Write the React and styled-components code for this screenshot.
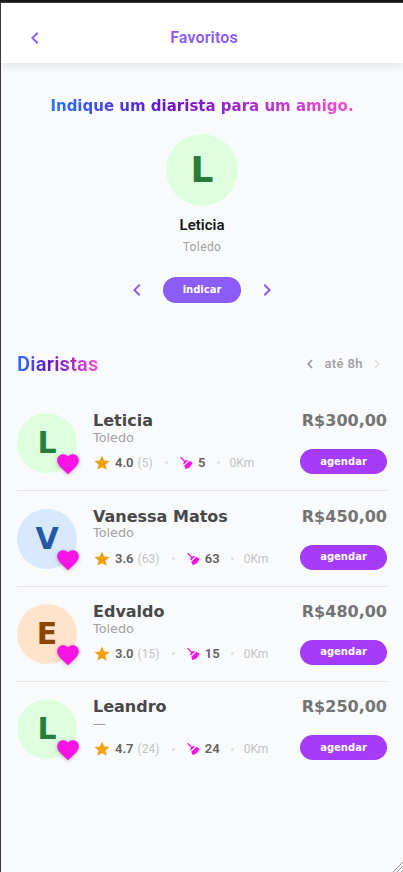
import { useState } from 'react';
import styled, { createGlobalStyle } from 'styled-components';

const GlobalStyle = createGlobalStyle`
  * {
    box-sizing: border-box;
  }

  body {
    margin: 0;
    background: #f9fafc;
    overflow: hidden;
  }

  button {
    padding: 0;
    border: none;
    background: transparent;
    cursor: pointer;
  }
`;

const Frame = styled.div`
  height: 872px;
  width: 403px;
  padding-top: 2px;
  background: #18181a;
`;

const Screen = styled.div`
  display: flex;
  flex-direction: column;
  position: relative;
  height: 870px;
  border-top: 1px solid #38383d;
  border-left: 1px solid #38383d;
  background: #f9fafc;
  overflow: hidden;
`;

const Header = styled.header`
  display: grid;
  grid-template-columns: 68px 1fr 68px;
  align-items: center;
  flex-shrink: 0;
  height: 60px;
  padding-top: 9px;
  background: white;
  box-shadow: 0 2px 10px rgba(0, 0, 0, 0.11);
`;

const HeaderTitle = styled.h1`
  margin: 0;
  padding-left: 4px;
  color: #8b5cf6;
  font: 600 16px/24px Roboto, sans-serif;
  letter-spacing: 0.15px;
  text-align: center;
`;

const IconButton = styled.button`
  display: flex;
  align-items: center;
  justify-content: center;
  width: ${({ $size }) => $size}px;
  height: ${({ $size }) => $size}px;
  margin-left: ${({ $left }) => $left || 0}px;
  color: ${({ $color }) => $color};
`;

const gradient = `
  background: linear-gradient(90deg, #2575fc 0%, #6a11cb 40%, #f94fd0 100%);
  -webkit-background-clip: text;
  background-clip: text;
  color: transparent;
`;

const Recommend = styled.section`
  display: flex;
  flex-direction: column;
  align-items: center;
  padding-top: 33px;
`;

const RecommendTitle = styled.h2`
  margin: 0 0 18px;
  font: bold 15px/20px "DejaVu Sans", sans-serif;
  ${gradient}
`;

const Avatar = styled.div`
  display: flex;
  align-items: center;
  justify-content: center;
  width: ${({ $size }) => $size}px;
  height: ${({ $size }) => $size}px;
  border-radius: 50%;
  background: ${({ $background }) => $background};
  color: ${({ $color }) => $color};
  font: bold ${({ $font }) => $font}px/1 "DejaVu Sans", sans-serif;
`;

const FeaturedName = styled.strong`
  margin-top: 8px;
  color: #18181b;
  font: 600 15px/22px Roboto, sans-serif;
`;

const FeaturedCity = styled.span`
  margin-top: 1px;
  color: #a1a1a1;
  font: 12px/20px Roboto, sans-serif;
  letter-spacing: 0.4px;
`;

const Controls = styled.div`
  display: flex;
  align-items: center;
  gap: 14px;
  height: 26px;
  margin-top: 20px;
`;

const Pill = styled.button`
  && {
    width: ${({ $width }) => $width}px;
    height: ${({ $height }) => $height}px;
    border-radius: 13px;
    background: ${({ $background }) => $background};
    color: white;
    font: bold 10px/14px "DejaVu Sans", sans-serif;
  }
`;

const List = styled.main`
  padding: 47px 16px 0;
`;

const ListHeader = styled.div`
  display: flex;
  align-items: center;
  justify-content: space-between;
  height: 28px;
  margin-bottom: 17px;
`;

const ListTitle = styled.h2`
  margin: 0;
  font: 600 20px/28px Roboto, sans-serif;
  letter-spacing: 0.25px;
  ${gradient}
`;

const Duration = styled.div`
  display: flex;
  align-items: center;
  gap: 5px;
  margin-right: 1px;
  color: #a1a1a1;
  font: 500 13px/18px Roboto, sans-serif;
  letter-spacing: 0.4px;
`;

const Row = styled.article`
  display: grid;
  grid-template-columns: 60px 1fr 87px;
  column-gap: 16px;
  height: 95.33px;
  padding-top: 18px;

  & + & {
    border-top: 1px solid #e4e4e7;
    padding-top: 17.33px;
  }
`;

const AvatarBox = styled.div`
  position: relative;
  height: 60px;
`;

const Heart = styled.svg`
  position: absolute;
  right: -4px;
  bottom: -4px;
  filter: drop-shadow(0 1px 2px rgba(0, 0, 0, 0.25));
`;

const Info = styled.div`
  display: flex;
  flex-direction: column;
  margin-top: -1px;
  white-space: nowrap;
`;

const Name = styled.strong`
  color: #484848;
  font: bold 16px/18px "DejaVu Sans", sans-serif;
`;

const City = styled.span`
  margin-top: -0.4px;
  color: #a1a1a1;
  font: 12.8px/16px "DejaVu Sans", sans-serif;
`;

const Stats = styled.div`
  display: flex;
  align-items: center;
  height: 18px;
  margin-top: 8.3px;
  color: #c4c4c4;
  font: 12px/18px Roboto, sans-serif;
`;

const Value = styled.b`
  margin: 0 4px;
  color: #616161;
  font-size: 13px;
  font-weight: 600;
`;

const Dot = styled.i`
  width: 3px;
  height: 3px;
  margin: 0 10px 0 ${({ $left }) => $left}px;
  border-radius: 50%;
  background: #dedede;
`;

const Side = styled.div`
  display: flex;
  flex-direction: column;
  align-items: flex-end;
  margin-top: -1px;
`;

const Price = styled.strong`
  margin-bottom: 19px;
  color: #747474;
  font: bold 16px/18px "DejaVu Sans", sans-serif;
  white-space: nowrap;
`;

const ResizeGrip = styled.svg`
  position: absolute;
  right: 0;
  bottom: 0;
`;

function Chevron({ size, right }) {
  return (
    <svg width={size} height={size} viewBox="0 0 24 24" fill="currentColor">
      {right ? (
        <path d="M8.59 16.59L13.17 12 8.59 7.41 10 6l6 6-6 6z" />
      ) : (
        <path d="M15.41 16.59L10.83 12l4.58-4.59L14 6l-6 6 6 6z" />
      )}
    </svg>
  );
}

function StarIcon() {
  return (
    <svg width="18" height="18" viewBox="0 0 24 24" fill="#f59e0b">
      <path d="M12 17.27L18.18 21l-1.64-7.03L22 9.24l-7.19-.61L12 2 9.19 8.63 2 9.24l5.46 4.73L5.82 21z" />
    </svg>
  );
}

function BroomIcon() {
  return (
    <svg width="16" height="16" viewBox="0 0 24 24" fill="#f913e4">
      <g transform="translate(24 0) scale(-1 1)">
        <path d="M19.36 2.72l1.42 1.42-5.72 5.71c1.07 1.54 1.22 3.39.32 4.59L9.06 8.12c1.2-.9 3.05-.75 4.59.32l5.71-5.72M5.93 17.57c-2.01-2.01-3.24-4.41-3.58-6.65l4.88-2.09 7.44 7.44-2.09 4.88c-2.24-.34-4.64-1.57-6.65-3.58z" />
      </g>
    </svg>
  );
}

const colors = {
  L: ['#ddffde', '#277c3e'],
  V: ['#d7e8ff', '#2459a9'],
  E: ['#ffe4cb', '#8b4500'],
};

const workers = [
  { name: 'Leticia', city: 'Toledo', rating: '4.0', jobs: 5, price: '300,00' },
  { name: 'Vanessa Matos', city: 'Toledo', rating: '3.6', jobs: 63, price: '450,00' },
  { name: 'Edvaldo', city: 'Toledo', rating: '3.0', jobs: 15, price: '480,00' },
  { name: 'Leandro', city: '—', rating: '4.7', jobs: 24, price: '250,00' },
];

function Initial({ name, size, font }) {
  const [background, color] = colors[name[0]];
  return (
    <Avatar $size={size} $font={font} $background={background} $color={color}>
      {name[0]}
    </Avatar>
  );
}

function Worker({ worker }) {
  return (
    <Row>
      <AvatarBox>
        <Initial name={worker.name} size={60} font={30} />
        <Heart width="26" height="26" viewBox="0 0 24 24" fill="#f913e4">
          <path d="M12 21.35l-1.45-1.32C5.4 15.36 2 12.28 2 8.5 2 5.42 4.42 3 7.5 3c1.74 0 3.41.81 4.5 2.09C13.09 3.81 14.76 3 16.5 3 19.58 3 22 5.42 22 8.5c0 3.78-3.4 6.86-8.55 11.54z" />
        </Heart>
      </AvatarBox>
      <Info>
        <Name>{worker.name}</Name>
        <City>{worker.city}</City>
        <Stats>
          <StarIcon />
          <Value>{worker.rating}</Value>
          <span>({worker.jobs})</span>
          <Dot $left={12.5} />
          <BroomIcon />
          <Value>{worker.jobs}</Value>
          <Dot $left={7} />
          <span>0Km</span>
        </Stats>
      </Info>
      <Side>
        <Price>R${worker.price}</Price>
        <Pill $width={87} $height={25} $background="#a63cfa">
          agendar
        </Pill>
      </Side>
    </Row>
  );
}

export default function App() {
  const [selected, setSelected] = useState(0);
  const featured = workers[selected];

  const move = (step) => {
    setSelected((selected + step + workers.length) % workers.length);
  };

  return (
    <>
      <GlobalStyle />
      <Frame>
        <Screen>
          <Header>
            <IconButton $size={24} $left={22} $color="#8b5cf6">
              <Chevron size={24} />
            </IconButton>
            <HeaderTitle>Favoritos</HeaderTitle>
          </Header>
          <Recommend>
            <RecommendTitle>Indique um diarista para um amigo.</RecommendTitle>
            <Initial name={featured.name} size={72} font={36} />
            <FeaturedName>{featured.name}</FeaturedName>
            <FeaturedCity>{featured.city}</FeaturedCity>
            <Controls>
              <IconButton $size={24} $color="#8b5cf6" onClick={() => move(-1)}>
                <Chevron size={24} />
              </IconButton>
              <Pill $width={78} $height={26} $background="#8b5cf6">
                indicar
              </Pill>
              <IconButton $size={24} $color="#8b5cf6" onClick={() => move(1)}>
                <Chevron size={24} right />
              </IconButton>
            </Controls>
          </Recommend>
          <List>
            <ListHeader>
              <ListTitle>Diaristas</ListTitle>
              <Duration>
                <IconButton $size={18} $color="#929292">
                  <Chevron size={18} />
                </IconButton>
                até 8h
                <IconButton $size={18} $color="#dedede">
                  <Chevron size={18} right />
                </IconButton>
              </Duration>
            </ListHeader>
            {workers.map((worker) => (
              <Worker key={worker.name} worker={worker} />
            ))}
          </List>
          <ResizeGrip width="10" height="10" viewBox="0 0 10 10" stroke="#929292">
            <path d="M0 10L10 0M4 10L10 4M8 10L10 8" />
          </ResizeGrip>
        </Screen>
      </Frame>
    </>
  );
}
